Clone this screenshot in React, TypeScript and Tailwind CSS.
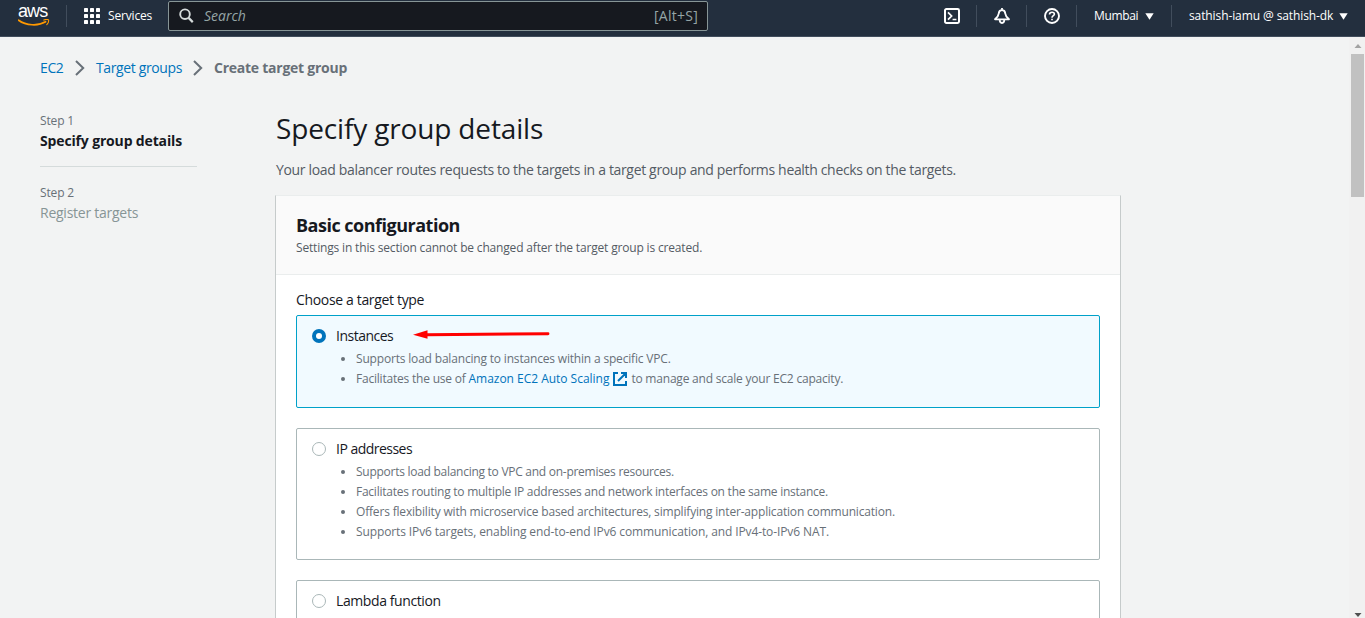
import type { ReactNode } from "react";

function Divider() {
  return <div className="h-[22px] w-px shrink-0 bg-[#414d5c]" />;
}

function Caret() {
  return (
    <svg className="h-[7px] w-[9px] shrink-0" viewBox="0 0 9 7">
      <path d="M0.3 0.3H8.7L4.5 6.8Z" fill="#fff" />
    </svg>
  );
}

function Header() {
  return (
    <header className="flex h-[37px] shrink-0 items-start border-b border-[#414d5c] bg-[#232f3e] text-[12px] text-white">
      <div className="flex h-8 w-[66px] flex-col pl-[18px]">
        <span className="mt-[2px] h-[17px] font-['Liberation_Sans',sans-serif] text-[18px] leading-[18px] tracking-[-0.9px]">aws</span>
        <svg className="h-[8px] w-[32px]" viewBox="0 0 32 8" fill="none">
          <path d="M0.6 1.2C8 6.6 20 7.4 27.6 2.8" stroke="#ff9900" strokeWidth="1.7" strokeLinecap="round" />
          <path d="M25.8 1.1C27.6 0.3 29.6 0.3 30.6 0.9C30.8 2.4 30.2 4.3 28.8 5.7" stroke="#ff9900" strokeWidth="1.1" strokeLinecap="round" strokeLinejoin="round" />
        </svg>
      </div>
      <div className="flex h-8 items-center">
        <Divider />
        <svg className="ml-[17px] h-4 w-4" viewBox="0 0 16 16" fill="#fff">
          {[0, 6, 12].map((y) =>
            [0, 6, 12].map((x) => <rect key={`${x}-${y}`} x={x} y={y} width="4" height="4" rx="0.4" />),
          )}
        </svg>
        <span className="ml-2 w-[60px] tracking-[-0.17px]">Services</span>
      </div>
      <div className="mt-px flex h-[30px] w-[540px] items-center rounded-[2px] border border-[#879596] bg-[#16191f] px-[9px] text-[14px] text-[#95a5a6]">
        <svg className="h-[18px] w-[18px]" viewBox="0 0 18 18" fill="none" stroke="#d5dbdb" strokeWidth="1.9">
          <circle cx="7" cy="7.2" r="4.8" />
          <path d="M10.6 10.9L14.8 15.1" strokeWidth="2.2" />
        </svg>
        <span className="ml-[8px] pb-px italic">Search</span>
        <span className="ml-auto pb-px tracking-[0.25px]">[Alt+S]</span>
      </div>
      <div className="ml-auto flex h-8 items-center">
        <svg className="h-4 w-4" viewBox="0 0 16 16" fill="none" stroke="#fff" strokeWidth="2">
          <rect x="1" y="1" width="14" height="14" rx="1.4" />
          <path d="M4 4.4L7.6 8L4 11.6M8.6 11.5H12.4" strokeWidth="1.7" />
        </svg>
        <div className="ml-4"><Divider /></div>
        <svg className="ml-[17px] h-4 w-4" viewBox="0 0 16 16" fill="none" stroke="#fff" strokeWidth="1.8" strokeLinejoin="round">
          <path d="M8 0V2.2M8 2.1C5.8 2.1 4.8 3.8 4.7 5.6C4.5 8 3.6 9.2 1 11.3H15C12.4 9.2 11.5 8 11.3 5.6C11.2 3.8 10.2 2.1 8 2.1Z" />
          <path d="M5.7 11.8C5.7 14 6.6 15 8 15C9.4 15 10.3 14 10.3 11.8" />
        </svg>
        <div className="ml-4"><Divider /></div>
        <svg className="ml-[17px] h-4 w-4" viewBox="0 0 16 16" fill="none" stroke="#fff" strokeWidth="1.9">
          <circle cx="8" cy="8" r="7" />
          <path d="M5.5 6.5C5.5 4.9 6.5 4.2 8 4.2C9.5 4.2 10.4 5 10.4 6.2C10.4 7.7 8 7.7 8 9.7M8 10.7V12.3" strokeWidth="1.6" />
        </svg>
        <div className="ml-4"><Divider /></div>
        <span className="ml-[17px] w-[51px] tracking-[-0.35px]">Mumbai</span>
        <Caret />
        <div className="ml-[17px]"><Divider /></div>
        <span className="ml-[17px] w-[150px] tracking-[-0.1px] whitespace-nowrap">sathish-iamu @ sathish-dk</span>
        <Caret />
        <div className="w-[17px]" />
      </div>
    </header>
  );
}

function Chevron() {
  return (
    <svg className="h-4 w-[10px] shrink-0" viewBox="0 0 10 16" fill="none" stroke="#687078" strokeWidth="2">
      <path d="M1 1L8.2 8L1 15" />
    </svg>
  );
}

function Radio({ checked }: { checked?: boolean }) {
  return checked ? (
    <div className="flex h-[14px] w-[14px] items-center justify-center rounded-full bg-[#0073bb]">
      <div className="h-[6px] w-[6px] rounded-full bg-white" />
    </div>
  ) : (
    <div className="h-[14px] w-[14px] rounded-full border border-[#aab7b8] bg-white" />
  );
}

function Item({ children, className }: { children: ReactNode; className: string }) {
  return (
    <li className="flex h-5 items-center whitespace-pre">
      <span className="mr-[11px] h-1 w-1 rounded-full bg-[#687078]" />
      <span className={className}>{children}</span>
    </li>
  );
}

function Tile({ title, titleClass, checked, className, mark, children }: { title: string; titleClass: string; checked?: boolean; className: string; mark?: ReactNode; children?: ReactNode }) {
  return (
    <div className={`rounded-[2px] border px-[15px] pt-[10px] ${className}`}>
      <div className="flex h-5 items-center">
        <Radio checked={checked} />
        <span className={`ml-[10px] pb-[2px] text-[14px] text-[#16191f] ${titleClass}`}>{title}</span>
        {mark}
      </div>
      <ul className="mt-[3px] pl-[29px] text-[12px] text-[#687078]">{children}</ul>
    </div>
  );
}

function Arrow() {
  return (
    <svg className="mb-[5px] ml-[19px] h-[10px] w-[138px]" viewBox="0 0 138 10">
      <path d="M1 5.7L15.5 1.2V9.7Z" fill="#f00" />
      <path d="M15 5.7L136 4.7" stroke="#f00" strokeWidth="2.9" strokeLinecap="round" />
    </svg>
  );
}

function External() {
  return (
    <svg className="mx-1 inline-block h-[14px] w-[14px] align-[-3px]" viewBox="0 0 14 14" fill="none" stroke="#0073bb" strokeWidth="2">
      <path d="M5 1H1V13H13V9M8 1H13V6M13 1L5 9" />
    </svg>
  );
}

export default function App() {
  return (
    <div className="flex h-[618px] w-[1365px] flex-col overflow-hidden bg-[#f2f3f3] font-['Open_Sans','Noto_Sans',sans-serif] text-[14px]">
      <Header />
      <div className="flex min-h-0 flex-1">
        <div className="w-[1349px] overflow-hidden pl-10">
          <nav className="mt-[21px] flex h-5 items-center text-[#0073bb]">
            <span className="w-[35px] pb-[2px] tracking-[-0.4px]">EC2</span>
            <Chevron />
            <span className="ml-[11px] w-[97px] pb-[2px] tracking-[-0.37px]">Target groups</span>
            <Chevron />
            <span className="ml-[11px] pb-[2px] font-bold tracking-[-0.25px] text-[#687078]">Create target group</span>
          </nav>
          <div className="flex">
            <aside className="mt-[33px] w-[235px] shrink-0">
              <div className="flex h-[56px] w-[157px] flex-col border-b border-[#d5dbdb] leading-5">
                <span className="text-[12px] tracking-[-0.15px] text-[#687078]">Step 1</span>
                <span className="font-bold tracking-[-0.15px] text-[#16191f]">Specify group details</span>
              </div>
              <div className="mt-[16px] flex flex-col leading-5">
                <span className="text-[12px] tracking-[-0.15px] text-[#687078]">Step 2</span>
                <span className="tracking-[-0.25px] text-[#879596]">Register targets</span>
              </div>
            </aside>
            <main className="mt-[32px] w-[846px] shrink-0">
              <h1 className="pl-px text-[28px] leading-9 tracking-[-0.15px] text-[#16191f]">Specify group details</h1>
              <p className="mt-[14px] pl-px leading-5 tracking-[-0.335px] whitespace-nowrap text-[#545b64]">
                Your load balancer routes requests to the targets in a target group and performs health checks on the targets.
              </p>
              <section className="mt-[15px] h-[500px] border border-[#c6cbcb] border-t-[#eaeded] bg-white">
                <div className="h-[79px] border-b border-[#eaeded] bg-[#fafafa] px-5 pt-[18px]">
                  <h2 className="text-[18px] leading-[22px] font-bold tracking-[-0.5px] text-[#16191f]">Basic configuration</h2>
                  <p className="mt-[2px] text-[12px] leading-5 tracking-[-0.17px] text-[#545b64]">
                    Settings in this section cannot be changed after the target group is created.
                  </p>
                </div>
                <div className="px-5 pt-[15px]">
                  <div className="leading-5 tracking-[-0.34px] text-[#16191f]">Choose a target type</div>
                  <div className="mt-[5px] flex flex-col gap-5">
                    <Tile title="Instances" titleClass="tracking-[-0.5px]" checked className="h-[93px] border-[#00a1c9] bg-[#f1faff]" mark={<Arrow />}>
                      <Item className="tracking-[-0.18px]">Supports load balancing to instances within a specific VPC.</Item>
                      <Item className="tracking-[-0.21px]">
                        Facilitates the use of <span className="tracking-[-0.02px] text-[#0073bb]">Amazon EC2 Auto Scaling</span>
                        <External />
                        to manage and scale your EC2 capacity.
                      </Item>
                    </Tile>
                    <Tile title="IP addresses" titleClass="tracking-[-0.52px]" className="h-[132px] border-[#aab7b8] bg-white">
                      <Item className="tracking-[-0.27px]">Supports load balancing to VPC and on-premises resources.</Item>
                      <Item className="tracking-[-0.25px]">Facilitates routing to multiple IP addresses and network interfaces on the same instance.</Item>
                      <Item className="tracking-[-0.18px]">Offers flexibility with microservice based architectures, simplifying inter-application communication.</Item>
                      <Item className="tracking-[-0.11px]">Supports IPv6 targets, enabling end-to-end IPv6 communication, and IPv4-to-IPv6 NAT.</Item>
                    </Tile>
                    <Tile title="Lambda function" titleClass="tracking-[-0.4px]" className="h-[93px] border-[#aab7b8] bg-white" />
                  </div>
                </div>
              </section>
            </main>
          </div>
        </div>
        <div className="flex w-4 flex-col items-center bg-[#f1f1f1] pl-px">
          <svg className="mt-[6px] h-[6px] w-[8px]" viewBox="0 0 8 6"><path d="M0.5 5L4 1L7.5 5Z" fill="#a3a3a3" /></svg>
          <div className="mt-[5px] h-[143px] w-[13px] bg-[#c1c1c1]" />
          <svg className="mt-auto mb-px h-[4px] w-[8px]" viewBox="0 0 8 4"><path d="M0.5 0L4 4L7.5 0Z" fill="#505050" /></svg>
        </div>
      </div>
    </div>
  );
}
